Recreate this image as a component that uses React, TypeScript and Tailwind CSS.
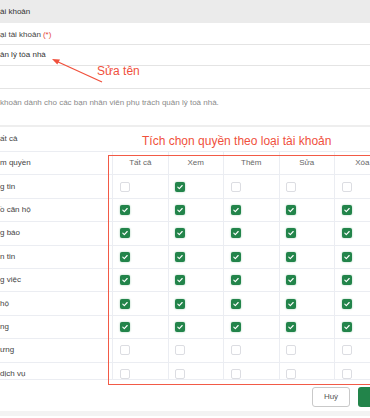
const columns = ["Tất cả", "Xem", "Thêm", "Sửa", "Xóa"];

const ALL = [true, true, true, true, true];
const NONE = [false, false, false, false, false];

const permissions = [
  { label: "g tin", checks: [false, true, false, false, false] },
  { label: "ồ căn hộ", checks: ALL },
  { label: "g báo", checks: ALL },
  { label: "n tin", checks: ALL },
  { label: "g việc", checks: ALL },
  { label: "hộ", checks: ALL },
  { label: "ng", checks: ALL },
  { label: "ưng", checks: NONE },
  { label: "dịch vụ", checks: NONE },
];

function Checkbox({ checked }: { checked: boolean }) {
  if (checked) {
    return (
      <span className="flex h-[10px] w-[10px] items-center justify-center rounded-[2px] bg-[#22844a] shadow-[0_0_2px_rgba(34,132,74,0.45)]">
        <svg width="8" height="8" viewBox="0 0 8 8" fill="none">
          <path d="M1.8 4.2 L3.3 5.6 L6.2 2.5" stroke="white" strokeWidth="1.1" strokeLinecap="round" strokeLinejoin="round" />
        </svg>
      </span>
    );
  }
  return <span className="block h-[10px] w-[10px] rounded-[2px] border border-[#dcdde2] bg-white" />;
}

export default function App() {
  return (
    <div className="relative h-[418px] w-[370px] overflow-hidden bg-white font-['Liberation_Sans',Arial,sans-serif] text-[8px] text-[#444]">
      {/* modal title */}
      <div className="flex h-[23px] items-center bg-[#ebebeb] text-[#333]">ài khoản</div>

      {/* name field */}
      <div className="flex h-[21px] items-center pt-[3px]">
        ại tài khoản <span className="ml-[2px] text-[#e5493a]">(*)</span>
      </div>
      <div className="flex h-[22px] items-center border-y border-[#e4e4e4] text-[#333]">ản lý tòa nhà</div>
      <div className="h-[23px] border-b border-[#e4e4e4]" />
      <div className="h-[38px] border-b-2 border-[#eeeeee] pt-[8px] text-[#8a8a8a]">
        khoản dành cho các bạn nhân viên phụ trách quản lý toà nhà.
      </div>

      {/* select all */}
      <div className="flex h-[25px] items-center border-b border-[#ebedf2]">ất cả</div>

      {/* permission table */}
      <div className="h-[228px] overflow-hidden border-b border-[#ebedf2]">
        <div className="flex h-[23.4px] border-b border-[#ebedf2]">
          <div className="flex w-[113px] shrink-0 items-center border-r border-[#ebedf2]">m quyền</div>
          {columns.map((c) => (
            <div key={c} className="flex w-[55.5px] shrink-0 items-center justify-center border-r border-[#ebedf2] text-[#666]">
              {c}
            </div>
          ))}
        </div>
        {permissions.map((p) => (
          <div key={p.label} className="flex h-[23.4px] border-b border-[#ebedf2]">
            <div className="flex w-[113px] shrink-0 items-center border-r border-[#ebedf2]">{p.label}</div>
            {p.checks.map((v, i) => (
              <div key={i} className="flex w-[55.5px] shrink-0 items-center border-r border-[#ebedf2] pl-[6.5px]">
                <Checkbox checked={v} />
              </div>
            ))}
          </div>
        ))}
      </div>

      {/* footer */}
      <div className="flex h-[31px] items-start justify-end gap-[8px] pt-[7px]">
        <button className="flex h-[20px] w-[38px] items-center justify-center rounded-[3px] border border-[#c9c9c9] bg-white text-[8px] text-[#555]">
          Huỷ
        </button>
        <button className="h-[20px] w-[40px] shrink-0 -mr-[28px] rounded-[3px] bg-[#22844a]" />
      </div>
      <div className="h-[5px] bg-[#f3f3f3]" />

      {/* annotations */}
      <svg className="absolute left-0 top-0" width="370" height="120" viewBox="0 0 370 120">
        <line x1="102" y1="82" x2="56" y2="61" stroke="#f0503c" strokeWidth="1.3" />
        <path d="M52 59 L60 59.6 L57.3 64.6 Z" fill="#f0503c" />
      </svg>
      <div className="absolute left-[97px] top-[63px] text-[12px] leading-[16px] text-[#f0503c]">Sửa tên</div>
      <div className="absolute left-[142px] top-[133px] text-[12px] leading-[16px] text-[#f0503c]">
        Tích chọn quyền theo loại tài khoản
      </div>
      <div className="absolute left-[108px] top-[155px] h-[230px] w-[280px] border border-[#f25a46]" />
    </div>
  );
}
